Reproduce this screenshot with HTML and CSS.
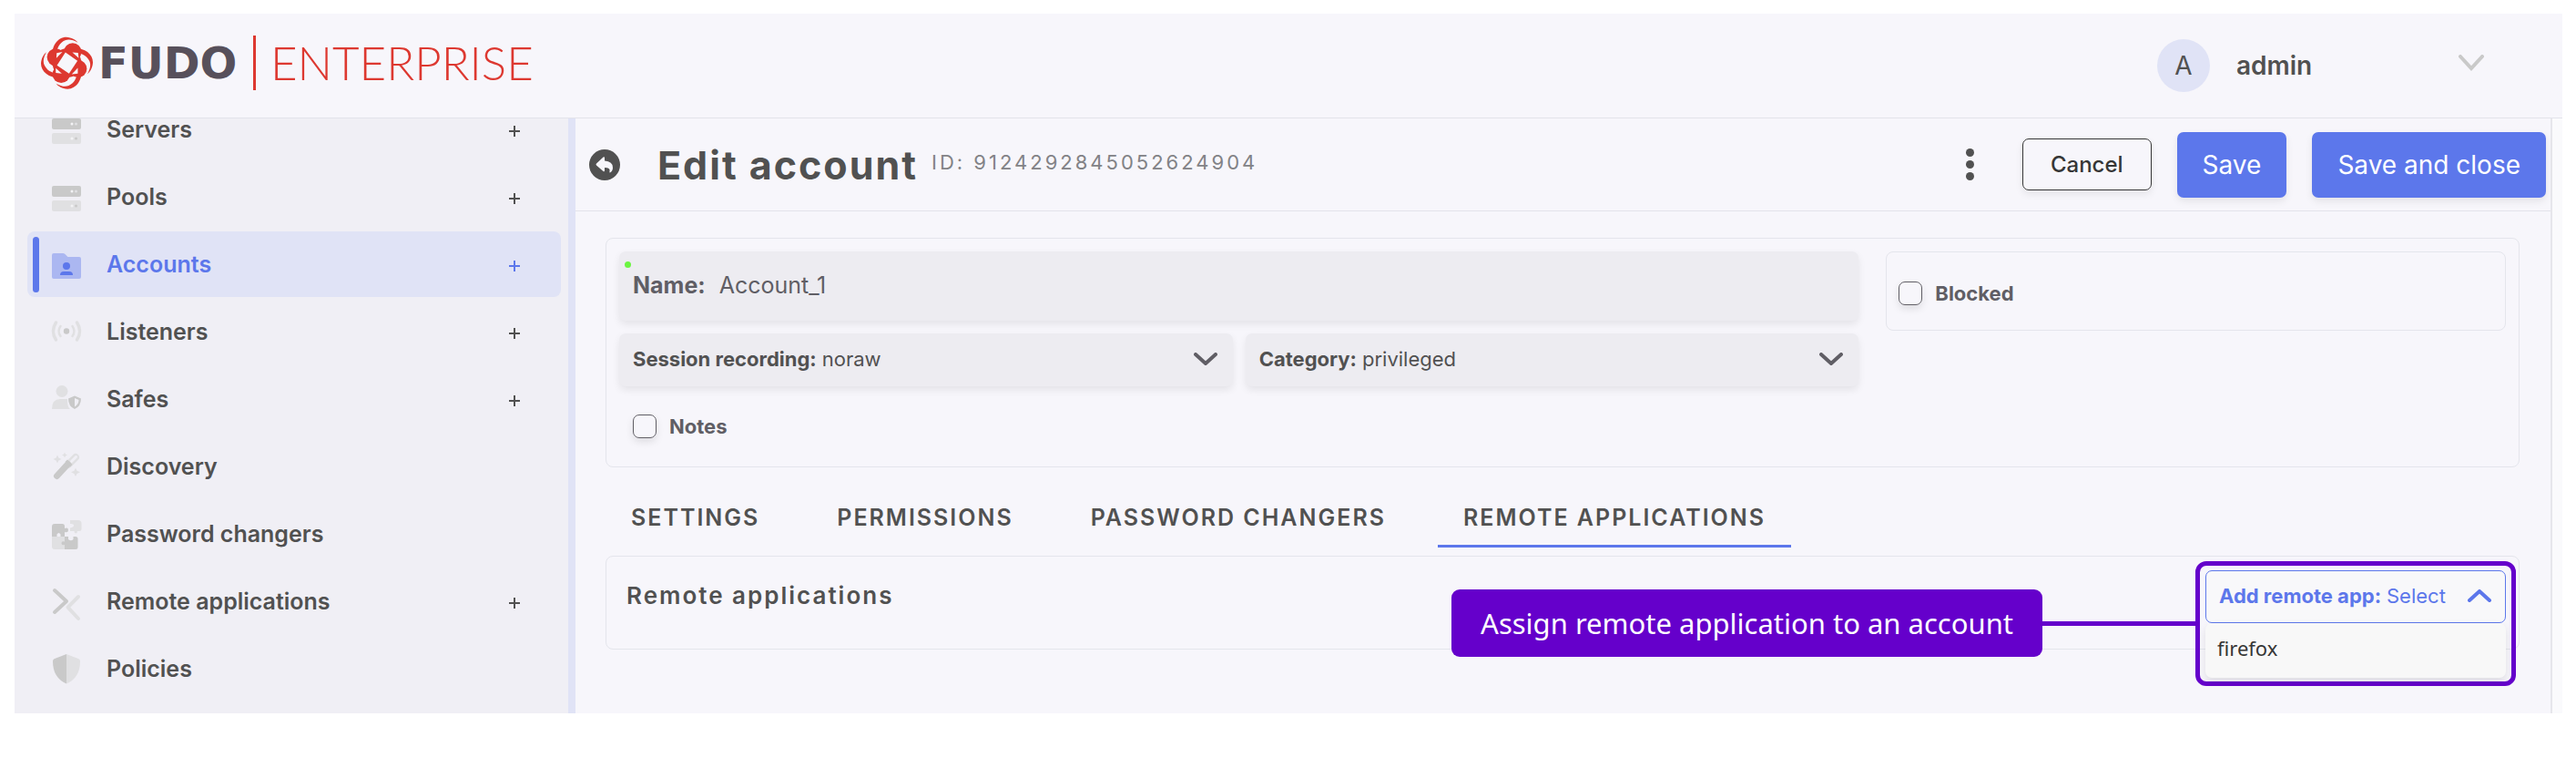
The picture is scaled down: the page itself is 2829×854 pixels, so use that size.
FILE: index.html
```html
<!DOCTYPE html>
<html lang="en">
<head>
<meta charset="utf-8">
<title>Fudo Enterprise - Edit account</title>
<link rel="stylesheet" href="styles.css">
</head>
<body>
<div class="app">
  <header class="topbar">
    <a class="brand" href="#">
      <svg class="brand-mark" viewBox="44 30 172 176" aria-hidden="true">
        <defs>
          <g id="petal">
            <path d="M81 100C78 62 98 31 128 31C146 32 159 40 166 49C150 40 136 37 124 42C106 50 98 66 96 84Z"/>
            <circle cx="149" cy="80" r="29"/>
          </g>
        </defs>
        <g fill="#dd3830">
          <use href="#petal"/>
          <use href="#petal" transform="rotate(90 130 117)"/>
          <use href="#petal" transform="rotate(180 130 117)"/>
          <use href="#petal" transform="rotate(270 130 117)"/>
          <circle cx="130" cy="117" r="48"/>
        </g>
        <g fill="#f7f6fb">
          <path d="M125 82L165 110L137 152L97 125Z"/>
          <path d="M96 84L115 80L95 101Z"/>
          <path d="M167 83L169 101L148 82Z"/>
          <path d="M166 152L146 154L166 133Z"/>
          <path d="M93 150L93 134L113 152Z"/>
        </g>
      </svg>
      <span class="brand-name">FUDO</span>
      <span class="brand-rule"></span>
      <span class="brand-edition">ENTERPRISE</span>
    </a>
    <button class="user" type="button">
      <span class="avatar">A</span>
      <span class="user-name">admin</span>
      <svg class="user-chevron" viewBox="0 0 28 18" aria-hidden="true"><path d="M2 2L14 15L26 2"/></svg>
    </button>
  </header>

  <div class="body">
    <nav class="sidebar">
      <ul class="menu">
        <li class="item">
          <svg class="icon" viewBox="0 0 32 40"><rect class="dark" y="8" width="32" height="12" rx="2"/><rect class="light" y="24" width="32" height="12" rx="2"/><circle class="dot" cx="22" cy="14" r="1.5"/><circle class="light" cx="26.5" cy="14" r="1.5"/><circle class="dot" cx="22" cy="30" r="1.5"/><circle class="dark" cx="26.5" cy="30" r="1.5"/></svg>
          <a href="#">Servers</a><button class="add" type="button" aria-label="Add server"></button>
        </li>
        <li class="item">
          <svg class="icon" viewBox="0 0 32 40"><rect class="dark" y="8" width="32" height="12" rx="2"/><rect class="light" y="24" width="32" height="12" rx="2"/><circle class="dot" cx="22" cy="14" r="1.5"/><circle class="light" cx="26.5" cy="14" r="1.5"/><circle class="dot" cx="22" cy="30" r="1.5"/><circle class="dark" cx="26.5" cy="30" r="1.5"/></svg>
          <a href="#">Pools</a><button class="add" type="button" aria-label="Add pool"></button>
        </li>
        <li class="item active">
          <svg class="icon" viewBox="0 0 32 40"><path class="light" d="M2 8H12Q13.500 8 14.500 9L17.500 12H30Q32 12 32 14V34Q32 36 30 36H2Q0 36 0 34V10Q0 8 2 8Z"/><circle class="dark" cx="16" cy="22" r="4"/><path class="dark" d="M9 32Q9 28 13 28H19Q23 28 23 32Z"/></svg>
          <a href="#" aria-current="page">Accounts</a><button class="add" type="button" aria-label="Add account"></button>
        </li>
        <li class="item">
          <svg class="icon" viewBox="0 0 32 40"><circle class="dark" cx="16" cy="19.500" r="3.200"/><path class="arc wide" d="M4.500 10C.600 16 .600 23 4.500 29M27.500 10C31.400 16 31.400 23 27.500 29"/><path class="arc" d="M9.500 14C7 17.500 7 21.500 9.500 25M22.500 14C25 17.500 25 21.500 22.500 25"/></svg>
          <a href="#">Listeners</a><button class="add" type="button" aria-label="Add listener"></button>
        </li>
        <li class="item">
          <svg class="icon" viewBox="0 0 32 40"><circle class="light" cx="11" cy="11.500" r="6.500"/><path class="light" d="M0 31Q0 20 9 20H17V23Q17 28 20 31Z"/><path class="dark" fill-rule="evenodd" d="M25 16.500L32 19.500Q32 28 25 31Q18 28 18 19.500ZM25 19V28.500Q29.500 26 29.500 21Z"/></svg>
          <a href="#">Safes</a><button class="add" type="button" aria-label="Add safe"></button>
        </li>
        <li class="item">
          <svg class="icon" viewBox="0 0 32 40"><path class="wand-tip" d="M18 18L26 10" /><path class="wand-slot" d="M21.500 14.500L26.500 9.500"/><path class="wand" d="M5.500 30.500L17.500 17.500"/><path class="dark" d="M17 12.500L22.500 18L20 20.500L14.500 15Z"/><path class="light" d="M6 7.500L7.400 10.600L10.500 12L7.400 13.400L6 16.500L4.600 13.400L1.500 12L4.600 10.600ZM14 4.500L14.900 6.600L17 7.500L14.900 8.400L14 10.500L13.100 8.400L11 7.500L13.100 6.600ZM26 21.500L27.500 24.700L31 26.300L27.500 27.900L26 31L24.500 27.900L21 26.300L24.500 24.700Z"/></svg>
          <a href="#">Discovery</a>
        </li>
        <li class="item">
          <svg class="icon" viewBox="0 0 32 40"><path class="light" d="M0 23H14V37H3Q0 37 0 34Z"/><path class="dark" d="M3 9H11.500Q14 9 14 11.500V14Q18 12.500 18 16Q18 19 14 18V23H9.500V20.500Q7.500 17.500 5.500 20.500V23H0V12Q0 9 3 9ZM14 23H18V26Q21 28.500 23.500 26V23H26Q28.500 23 28.500 25.500V34.500Q28.500 37 26 37H14V32Q10.500 33 10.500 30.200Q10.500 27.500 14 28.500Z"/><path class="light" d="M20 5H29Q32.500 5 32.500 8.500V15Q32.500 17 30 17H28Q28 19.500 26.300 19.500T24.500 17H20V13.500Q24 13 24 10.800T20 9Z"/></svg>
          <a href="#">Password changers</a>
        </li>
        <li class="item">
          <svg class="icon" viewBox="0 0 32 40"><path class="line-dark" d="M3 8L16 20L3 32"/><path class="line-light" d="M29 15L17.500 26.700L29 39"/></svg>
          <a href="#">Remote applications</a><button class="add" type="button" aria-label="Add remote application"></button>
        </li>
        <li class="item">
          <svg class="icon" viewBox="0 0 32 40"><path class="dark" d="M16 4V36.500Q1 30 1 12Q1 10 2.500 9.300Z"/><path class="light" d="M16 4L29.500 9.300Q31 10 31 12Q31 30 16 36.500Z"/></svg>
          <a href="#">Policies</a>
        </li>
      </ul>
    </nav>

    <main class="content">
      <div class="page-head">
        <button class="back" type="button" aria-label="Back">
          <svg viewBox="0 0 34 34" aria-hidden="true"><circle cx="17" cy="17" r="17" fill="#515151"/><path fill="#f7f6fb" d="M15.500 8.500Q17 7.500 17 9.500V12.500Q26 13 26 20Q26 23.500 23 25.500Q22 25.500 22.500 24Q23.500 20 17 20V23Q17 25 15.500 24L8 17.500Q7 16.500 8 15.500Z"/></svg>
        </button>
        <h1>Edit account</h1>
        <span class="record-id">ID: 9124292845052624904</span>
        <div class="actions">
          <button class="more" type="button" aria-label="More"><i></i><i></i><i></i></button>
          <button class="btn outline" type="button">Cancel</button>
          <button class="btn primary" type="button">Save</button>
          <button class="btn primary" type="button">Save and close</button>
        </div>
      </div>

      <div class="page-body">
        <section class="card general">
          <div class="fields">
            <label class="field name"><b>Name:</b><input type="text" value="Account_1"></label>
            <label class="field pick"><b>Session recording:</b>
              <select><option>noraw</option></select>
              <svg class="chevron" viewBox="0 0 26 14" aria-hidden="true"><path d="M2 2L13 12L24 2"/></svg></label>
            <label class="field pick"><b>Category:</b>
              <select><option>privileged</option></select>
              <svg class="chevron" viewBox="0 0 26 14" aria-hidden="true"><path d="M2 2L13 12L24 2"/></svg></label>
            <label class="check"><input type="checkbox">Notes</label>
          </div>
          <div class="blocked"><label class="check"><input type="checkbox">Blocked</label></div>
        </section>

        <div class="tabs" role="tablist">
          <button class="tab" type="button" role="tab">SETTINGS</button>
          <button class="tab" type="button" role="tab">PERMISSIONS</button>
          <button class="tab" type="button" role="tab">PASSWORD CHANGERS</button>
          <button class="tab current" type="button" role="tab" aria-selected="true">REMOTE APPLICATIONS</button>
        </div>

        <section class="card remote">
          <h2>Remote applications</h2>
          <div class="highlight">
            <label class="add-app"><b>Add remote app:</b>
              <select><option>Select</option></select>
              <svg class="chevron" viewBox="0 0 26 14" aria-hidden="true"><path d="M2 12L13 2L24 12"/></svg></label>
            <ul class="options"><li>firefox</li></ul>
            <div class="callout"><span class="callout-text">Assign remote application to an account</span><span class="connector"></span></div>
          </div>
        </section>
      </div>
    </main>
  </div>
</div>
</body>
</html>
```
FILE: styles.css
```css
* { box-sizing: border-box; }

body {
  margin: 0;
  padding: 15px 15px 15px 16px;
  background: #fff;
  color: #515151;
  font: 400 22px/28px Inter, "Liberation Sans", sans-serif;
}

button, input, select {
  margin: 0;
  padding: 0;
  border: 0;
  background: none;
  color: inherit;
  font: inherit;
  letter-spacing: inherit;
}

b { font-weight: 700; }
ul { margin: 0; padding: 0; list-style: none; }
a { color: inherit; text-decoration: none; }

.app { background: #f7f6fb; }

/* Top bar */
.topbar {
  display: flex;
  align-items: center;
  justify-content: space-between;
  height: 115px;
  padding: 0 86px 0 29px;
  border-bottom: 1px solid #e3e3ea;
}
.brand { display: flex; align-items: center; padding-bottom: 6px; }
.brand-mark { width: 57px; height: 59px; margin-right: 6px; }
.brand-name {
  width: 170px;
  color: #57505b;
  font: 700 48px/60px "DejaVu Sans", sans-serif;
}
.brand-rule { width: 3px; height: 60px; background: #dd3830; }
.brand-edition {
  margin-left: 16px;
  color: #dd3830;
  font: 300 51px/60px Lato, sans-serif;
}
.user {
  display: flex;
  align-items: center;
  width: 359px;
  font-size: 28px;
  line-height: 34px;
}
.avatar {
  width: 58px;
  height: 58px;
  margin-right: 29px;
  border-radius: 50%;
  background: #e0e3f6;
  line-height: 58px;
}
.user-name { font-weight: 600; }
.user-chevron {
  width: 28px;
  height: 18px;
  margin: 0 0 6px auto;
  fill: none;
  stroke: #c9c9c9;
  stroke-width: 4;
  stroke-linecap: round;
}

/* Sidebar */
.body { display: flex; }
.sidebar {
  flex: 0 0 616px;
  padding: 0 8px 13px 14px;
  background: #f0eff5;
  border-right: 8px solid #e0e3f6;
}
.menu {
  display: grid;
  gap: 2px;
}
.item {
  display: flex;
  align-items: center;
  height: 72px;
  padding: 0 45px 0 27px;
  border-radius: 8px;
  font-size: 25px;
  line-height: 24px;
  font-weight: 600;
}
.item:first-child {
  height: 48px;
  padding-bottom: 24px;
}
.item.active {
  padding-left: 6px;
  background: #e0e3f6;
  color: #5c77eb;
}
.item.active::before {
  content: "";
  width: 7px;
  height: 61px;
  margin-right: 14px;
  border-radius: 4px;
  background: #5c77eb;
}
.icon {
  width: 32px;
  height: 40px;
  margin-right: 28px;
  overflow: visible;
}
.add {
  width: 12px;
  height: 12px;
  margin: 3px 0 0 auto;
  background:
    linear-gradient(currentColor, currentColor) center / 12px 2px no-repeat,
    linear-gradient(currentColor, currentColor) center / 2px 12px no-repeat;
}
.dark { fill: #c9c9c9; }
.light { fill: #e0e0e2; }
.dot { fill: #f3f3f5; }
.active .dark { fill: #5c77eb; }
.active .light { fill: #abb7f1; }
.arc { fill: none; stroke: #e0e0e2; stroke-width: 2.5; stroke-linecap: round; }
.arc.wide { stroke-width: 3.5; }
.wand { fill: none; stroke: #c9c9c9; stroke-width: 7; stroke-linecap: round; }
.wand-tip { fill: none; stroke: #e0e0e2; stroke-width: 8; stroke-linecap: round; }
.wand-slot { fill: none; stroke: #f0eff5; stroke-width: 3; stroke-linecap: round; }
.line-dark, .line-light { fill: none; stroke: #c9c9c9; stroke-width: 4; stroke-linecap: round; stroke-linejoin: round; }
.line-light { stroke: #e0e0e2; }

/* Page header */
.content {
  flex: 1;
  min-width: 0;
  margin-right: 11px;
  border-right: 2px solid #e6e6eb;
  box-shadow: 11px 0 #fafafc;
}
.page-head {
  display: flex;
  align-items: center;
  height: 102px;
  padding: 0 5px 0 15px;
  border-bottom: 1px solid #e3e3ea;
}
.back { width: 34px; height: 34px; }
.back svg { display: block; }
h1 {
  margin: 0 15px 0 41px;
  font-size: 43px;
  line-height: 52px;
  font-weight: 700;
  letter-spacing: 2px;
}
.record-id {
  padding-bottom: 6px;
  color: #828286;
  letter-spacing: 3px;
}
.actions {
  display: flex;
  align-items: center;
  gap: 28px;
  margin-left: auto;
}
.more { display: grid; gap: 4px; margin-right: 25px; }
.more i { width: 9px; height: 9px; border-radius: 50%; background: #515151; }
.btn {
  padding: 0 30px;
  border-radius: 7px;
  font-weight: 500;
  box-shadow: 0 4px 8px rgba(0, 0, 0, .08);
}
.btn.outline {
  height: 57px;
  border: 1px solid #363636;
  color: #363636;
  font-size: 24px;
}
.btn.primary {
  height: 72px;
  padding: 0 28px;
  background: #5c77eb;
  color: #fff;
  font-size: 28px;
  font-weight: 400;
}

/* Cards */
.page-body { padding: 29px 34px 0 33px; }
.card {
  border: 1px solid #e4e5ec;
  border-radius: 8px;
}
.general {
  display: grid;
  grid-template-columns: 2fr 1fr;
  align-items: start;
  gap: 30px;
  padding: 14px;
}
.fields {
  display: grid;
  grid-template-columns: 1fr 1fr;
  gap: 14px;
}
.field {
  display: flex;
  align-items: center;
  border-radius: 7px;
  background: #edecf1;
  box-shadow: 0 4px 8px rgba(0, 0, 0, .08);
}
.field.name {
  position: relative;
  grid-column: 1 / -1;
  gap: 15px;
  height: 76px;
  padding: 0 15px 2px;
  color: #605e65;
  font-size: 25px;
}
.field.name::before {
  content: "";
  position: absolute;
  top: 11px;
  left: 6px;
  width: 7px;
  height: 7px;
  border-radius: 50%;
  background: #6cf542;
}
.field.name input { flex: 1; }
.field.pick {
  gap: 6px;
  height: 58px;
  padding: 0 17px 2px 15px;
}
select { flex: 1; min-width: 0; appearance: none; }
.chevron {
  width: 26px;
  height: 14px;
  fill: none;
  stroke: #605e65;
  stroke-width: 4;
  stroke-linecap: round;
}
.check {
  display: flex;
  align-items: center;
  gap: 14px;
  color: #605e65;
  font-weight: 700;
}
.check input {
  width: 26px;
  height: 26px;
  appearance: none;
  border: 1px solid #605e65;
  border-radius: 7px;
  box-shadow: 0 4px 8px rgba(0, 0, 0, .1);
}
.fields .check { height: 60px; padding-left: 15px; }
.blocked {
  padding: 31px 13px 26px;
  border: 1px solid #e4e5ec;
  border-radius: 8px;
}

/* Tabs */
.tabs { display: flex; gap: 29px; padding-top: 24px; }
.tab {
  height: 64px;
  padding: 0 28px;
  border-bottom: 3px solid transparent;
  font-size: 25px;
  font-weight: 600;
  letter-spacing: 2px;
}
.tab.current { border-color: #5c77eb; }

/* Remote applications */
.remote {
  display: flex;
  justify-content: space-between;
  height: 103px;
  margin-top: 9px;
  padding: 5px 3px 0 22px;
}
h2 {
  margin: 20px 0 0;
  font-size: 26px;
  line-height: 36px;
  font-weight: 600;
  letter-spacing: 2px;
}
.highlight {
  position: relative;
  width: 352px;
  height: 137px;
  padding: 5px 6px;
  border: 5px solid #6500cb;
  border-radius: 12px;
}
.add-app {
  display: flex;
  align-items: center;
  gap: 6px;
  height: 58px;
  padding: 0 15px 2px 14px;
  border: 1px solid #5c77eb;
  border-radius: 7px;
  background: #f8f8fa;
  color: #5c77eb;
}
.add-app .chevron { stroke: #5c77eb; }
.options {
  border-radius: 7px;
  background: #f8f8f8;
  color: #363636;
  font-family: "Noto Sans", sans-serif;
  box-shadow: 0 4px 8px rgba(0, 0, 0, .1);
}
.options li { padding: 13px 13px 19px; }
.callout {
  position: absolute;
  top: 26px;
  right: 100%;
  display: flex;
  align-items: center;
  margin-right: 5px;
}
.callout-text {
  padding: 17px 32px;
  border-radius: 9px;
  background: #6500cb;
  color: #fff;
  font: 400 31px/40px "Noto Sans", sans-serif;
  white-space: nowrap;
}
.connector { width: 168px; height: 5px; background: #6500cb; }
```
